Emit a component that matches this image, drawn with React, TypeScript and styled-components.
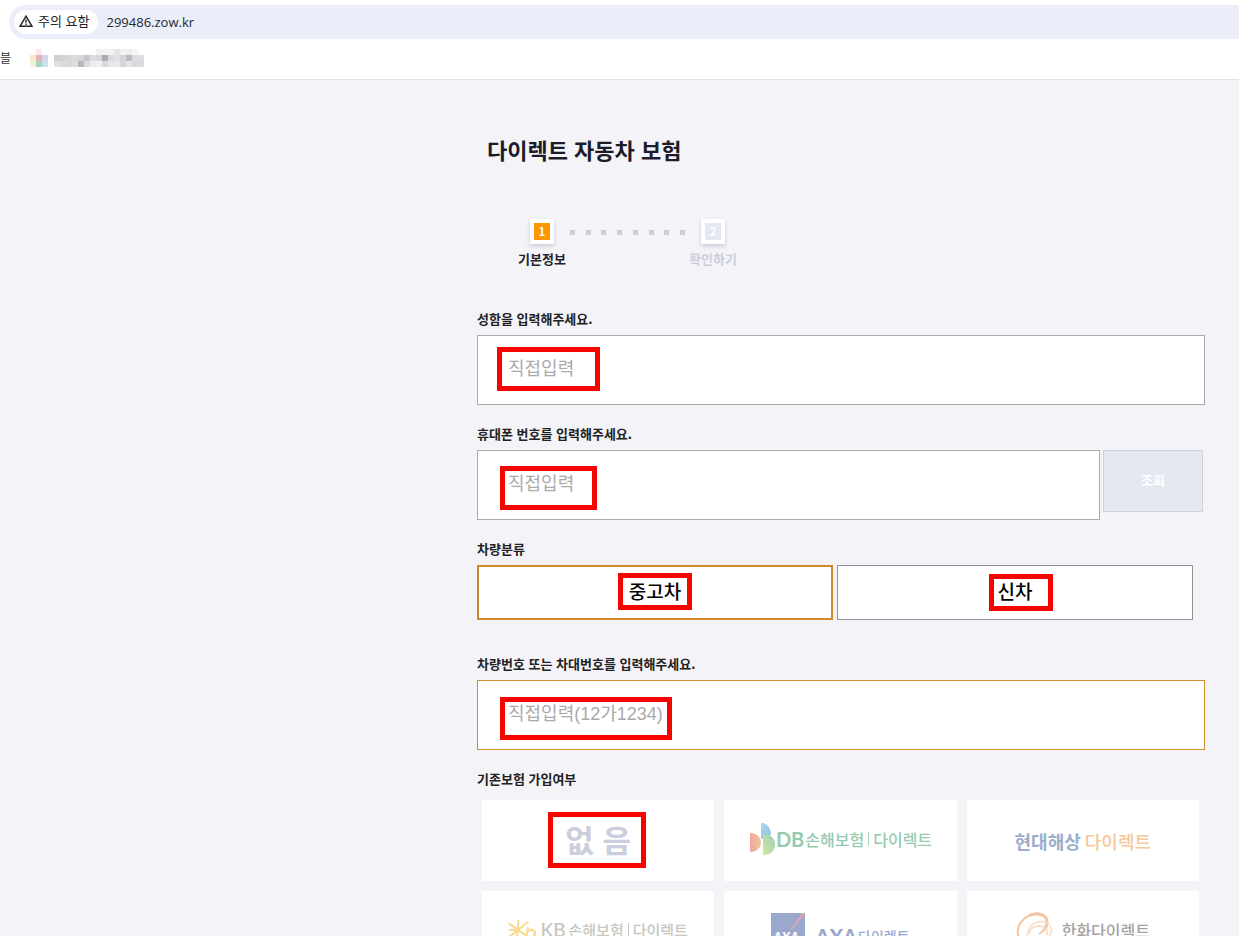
import React from "react";
import styled, { createGlobalStyle, css } from "styled-components";

const GlobalStyle = createGlobalStyle`
  *, *::before, *::after { box-sizing: border-box; }
  body {
    margin: 0;
    background: #f3f3f8;
    color: #222;
    font-family: "Noto Sans CJK KR", sans-serif;
  }
  button, input { font-family: inherit; }
`;

const Shell = styled.div`
  display: flex;
  flex-direction: column;
  height: 100vh;
  overflow: hidden;
`;

/* Browser chrome */
const Chrome = styled.header`
  flex: none;
  background: #fff;
  border-bottom: 1px solid #e0e1e6;
  padding-top: 5px;
`;

const AddressBar = styled.div`
  display: flex;
  align-items: center;
  gap: 8px;
  height: 34px;
  margin-left: 9px;
  padding-left: 5px;
  border-radius: 17px 0 0 17px;
  background: #ebeef8;
`;

const SecurityChip = styled.button`
  display: flex;
  align-items: center;
  gap: 5px;
  height: 24px;
  padding: 0 9px 2px 5px;
  border: 0;
  border-radius: 12px;
  background: #fff;
  color: #222;
  font-size: 13px;
  line-height: 22px;
`;

const Url = styled.span`
  padding-bottom: 1px;
  color: #26282c;
  font-family: "Open Sans", sans-serif;
  font-size: 13px;
  line-height: 20px;
`;

const Bookmarks = styled.nav`
  display: flex;
  align-items: center;
  gap: 19px;
  height: 40px;
  padding-bottom: 3px;
  overflow: hidden;
  color: #333;
  font-size: 12px;
`;

const Page = styled.main`
  flex: 1;
  min-height: 0;
  overflow-y: auto;
  scrollbar-width: none;
  padding: 53px 34px 40px 477px;
`;

const Title = styled.h1`
  margin: 0 0 54px;
  padding-left: 10px;
  color: #1d1b2a;
  font-size: 22px;
  font-weight: 700;
  line-height: 32px;
`;

/* Progress */
const Steps = styled.ol`
  display: flex;
  margin: 0 0 40px;
  padding: 0 0 0 40px;
  list-style: none;
`;

const Step = styled.li<{ $active?: boolean }>`
  display: flex;
  flex-direction: column;
  align-items: center;
  gap: 6px;
  width: 50px;
  color: ${(p) => (p.$active ? "#222130" : "#cbcedc")};
  font-size: 13px;
  font-weight: 700;
  line-height: 18px;
  padding-bottom: 2px;
  white-space: nowrap;
`;

const StepNumber = styled.span<{ $active?: boolean }>`
  width: 24px;
  height: 25px;
  border: 4px solid #fff;
  background: ${(p) => (p.$active ? "#ff9800" : "#e5e8f1")};
  box-shadow: 0 2px 4px #c9cad8;
  color: #fff;
  font-size: 11px;
  line-height: 17px;
  text-align: center;
`;

const Dots = styled.li`
  display: flex;
  justify-content: space-between;
  width: 121px;
  padding: 11px 3px 0;
`;

const Dot = styled.span`
  width: 5px;
  height: 5px;
  background: #cbcedc;
`;

/* Form */
const Group = styled.div`
  min-height: 95px;
  margin-bottom: 20px;
`;

const labelText = css`
  display: block;
  margin: 0 0 7px;
  color: #222;
  font-size: 13px;
  font-weight: 700;
  line-height: 18px;
`;

const Label = styled.label`
  ${labelText}
`;

const Heading = styled.h2`
  ${labelText}
`;

const Row = styled.div<{ $gap: number; $end: number }>`
  display: flex;
  align-items: flex-start;
  gap: ${(p) => p.$gap}px;
  padding-right: ${(p) => p.$end}px;
`;

const Choices = styled.div`
  display: grid;
  grid-template-columns: 1fr 1fr;
  gap: 4px;
  padding-right: 12px;
`;

const Field = styled.div`
  position: relative;
  flex: 1;
`;

const TextInput = styled.input<{ $accent?: boolean }>`
  display: block;
  width: 100%;
  height: 70px;
  padding: 0 30px 2px;
  border: 1px solid ${(p) => (p.$accent ? "#cd8f30" : "#aaa")};
  border-radius: 0;
  outline: 0;
  background: #fff;
  font-family: "Liberation Sans", "Noto Sans CJK KR", sans-serif;
  font-size: 18px;
  &::placeholder { color: #aaa; opacity: 1; }
`;

const LookupButton = styled.button`
  width: 100px;
  height: 62px;
  padding: 0 0 3px;
  border: 1px solid #cdd1da;
  background: #e5e8f1;
  color: #fff;
  font-size: 13px;
  font-weight: 700;
`;

const ChoiceButton = styled.button<{ $selected?: boolean }>`
  position: relative;
  height: 55px;
  padding: 0 0 3px;
  border: ${(p) => (p.$selected ? "2px solid #d0892a" : "1px solid #929296")};
  background: #fff;
  color: #000;
  font-size: 19px;
  font-weight: 500;
  line-height: 28px;
`;

/* Red highlight frame drawn over a control */
const Mark = styled.span<{ $x: string; $y: number; $w: number; $h: number }>`
  position: absolute;
  left: ${(p) => p.$x};
  top: ${(p) => p.$y}px;
  width: ${(p) => p.$w}px;
  height: ${(p) => p.$h}px;
  border: 5px solid #f50400;
  pointer-events: none;
`;

const Insurers = styled.div`
  display: grid;
  grid-template-columns: repeat(3, 1fr);
  gap: 10px;
  padding: 5px 6px 0 5px;
`;

const Insurer = styled.button`
  position: relative;
  display: flex;
  align-items: center;
  justify-content: center;
  height: 81px;
  padding: 0 0 4px;
  border: 0;
  background: #fff;
  white-space: nowrap;
`;

const Word = styled.span<{ $color: string; $size: number; $weight?: number; $latin?: boolean }>`
  color: ${(p) => p.$color};
  font-family: ${(p) => (p.$latin ? '"Lato", ' : "")}"Noto Sans CJK KR", sans-serif;
  font-size: ${(p) => p.$size}px;
  font-weight: ${(p) => p.$weight ?? 500};
  line-height: 24px;
`;

const Divider = styled.span<{ $color: string }>`
  width: 1px;
  height: 14px;
  margin: 0 4px;
  background: ${(p) => p.$color};
`;

const LogoGroup = styled.span<{ $gap: number; $drop?: number }>`
  display: flex;
  align-items: center;
  gap: ${(p) => p.$gap}px;
  padding-top: ${(p) => p.$drop ?? 0}px;
`;

const WarningIcon = () => (
  <svg width="14" height="12" viewBox="0 0 14 12" aria-hidden="true">
    <path d="M7 1.200 13 11.300H1Z" fill="none" stroke="#25272b" strokeWidth="1.500" />
    <path d="M7 4.500v3.200M7 8.600v1.400" stroke="#25272b" strokeWidth="1.400" />
  </svg>
);

const MOSAIC: string[][] = [
  ["", "#fbe8e8", "", "", "", "", "", "", "", "", "", "#f3f1f3", "#f1f1f3", "#f1f1f3", "#e2e4e7", "#f1f1f2", "#efeff1", "#f5f5f6", ""],
  ["#fae6cb", "#e3b3bb", "#d5d6ec", "", "#d0cfd0", "#d4d4d4", "#d8d8d8", "#dddcd9", "#d5d5da", "#ccc5cb", "#dddde5", "#d8d5dc", "#aaaab1", "#d9dade", "#dfe1e4", "#d4d4d9", "#bdb9c8", "#dedee1", "#dcdde0"],
  ["#f0f1df", "#a9d5b5", "#cae0ed", "", "#e2e1df", "#dddcdc", "#d9d9d9", "#dfdeda", "#b7b7bf", "#dedbdf", "#eeeef0", "#f0f0f2", "#d8d8de", "#e7e7e9", "#e9e9eb", "#d6d6d9", "#e4e4e9", "#d8d8da", "#dcdce0"],
];

const Mosaic = () => (
  <svg width="120" height="18" viewBox="0 0 120 18" role="img" aria-label="bookmark">
    {MOSAIC.flatMap((row, y) =>
      row.map((fill, x) =>
        fill ? (
          <rect key={`${x}-${y}`} x={x * 6} y={y * 6} width="6" height="6" fill={fill} shapeRendering="crispEdges" />
        ) : null
      )
    )}
  </svg>
);

const DbLogo = () => (
  <svg width="26" height="34" viewBox="0 0 26 34" aria-hidden="true">
    <defs>
      <linearGradient id="dbBlue" x1="0" y1="0" x2="1" y2="1">
        <stop offset="0" stopColor="#a9dcf3" />
        <stop offset="1" stopColor="#91bce2" />
      </linearGradient>
      <linearGradient id="dbRed" x1="0" y1="0" x2="1" y2="0">
        <stop offset="0" stopColor="#eda6a0" />
        <stop offset="1" stopColor="#f6c39f" />
      </linearGradient>
      <linearGradient id="dbGreen" x1="0" y1="1" x2="1" y2="0">
        <stop offset="0" stopColor="#d3e89f" />
        <stop offset="1" stopColor="#9bcdb5" />
      </linearGradient>
    </defs>
    <path d="M12 2q0-1 1-1c5 0 9 5 9 12H14v4H12Z" fill="url(#dbBlue)" />
    <path d="M1 12q0-1 1-1c5 0 10 4 10 9.500S7 30 2 30q-1 0-1-1Z" fill="url(#dbRed)" />
    <path d="M14 13q0-1 1-1c6 0 11 4 11 10.500S21 33 15 33q-1 0-1-1Z" fill="url(#dbGreen)" />
  </svg>
);

const KbLogo = () => (
  <svg width="29" height="22" viewBox="0 0 29 22" fill="none" stroke="#f8dc92" strokeWidth="2.200" aria-hidden="true">
    <path d="M10.500 1 9 20M1 4.500 20 18M20 3 1 18M1 11h9" />
    <path d="M20 8l-2 12M19 13c3-3 8-3 8 1 0 4-4 6-9 5" />
  </svg>
);

const AxaLogo = () => (
  <svg width="34" height="34" viewBox="0 0 34 34" aria-hidden="true">
    <path d="M0 0h34v34H0Z" fill="#9ba8ce" />
    <path d="M32 0h2L22 15l-2 1.500Z" fill="#eba1ad" stroke="#eba1ad" />
    <text x="15" y="29" textAnchor="middle" fill="#fff" fontFamily="Lato, sans-serif" fontSize="13" fontWeight="900" fontStyle="italic">AXA</text>
  </svg>
);

const HanwhaLogo = () => (
  <svg width="37" height="36" viewBox="0 0 37 36" fill="none" aria-hidden="true">
    <path d="M8 31C-1 25 0 13 9 6 18-1 30 0 31 9c0 6-3 10-8 13" stroke="#f5c4a0" strokeWidth="2" />
    <path d="M13 3.500C22 0 30 3 31 9c0 4-1 7-3 9" stroke="#f5c4a0" strokeWidth="3" />
    <path d="M15 32C9 26 11 15 19 11c7-3 14-1 16 5 2 7-6 14-14 15" stroke="#f9dcc6" strokeWidth="1.500" />
    <path d="M13 22c1-5 5-8 10-8 6 0 9 4 8 9" stroke="#f8d6bd" strokeWidth="1.500" />
  </svg>
);

export default function App() {
  return (
    <Shell lang="ko">
      <GlobalStyle />
      <Chrome>
        <AddressBar>
          <SecurityChip type="button">
            <WarningIcon />
            주의 요함
          </SecurityChip>
          <Url>299486.zow.kr</Url>
        </AddressBar>
        <Bookmarks>
          <span>블</span>
          <Mosaic />
        </Bookmarks>
      </Chrome>

      <Page>
        <Title>다이렉트 자동차 보험</Title>
        <Steps>
          <Step $active aria-current="step">
            <StepNumber $active>1</StepNumber>
            기본정보
          </Step>
          <Dots aria-hidden="true">
            {Array.from({ length: 8 }, (_, i) => (
              <Dot key={i} />
            ))}
          </Dots>
          <Step>
            <StepNumber>2</StepNumber>
            확인하기
          </Step>
        </Steps>

        <form onSubmit={(e) => e.preventDefault()}>
          <Group>
            <Label htmlFor="name">성함을 입력해주세요.</Label>
            <Field>
              <TextInput id="name" placeholder="직접입력" />
              <Mark $x="20px" $y={12} $w={103} $h={44} />
            </Field>
          </Group>

          <Group>
            <Label htmlFor="phone">휴대폰 번호를 입력해주세요.</Label>
            <Row $gap={3} $end={2}>
              <Field>
                <TextInput id="phone" type="tel" placeholder="직접입력" />
                <Mark $x="23px" $y={16} $w={97} $h={44} />
              </Field>
              <LookupButton type="button">조회</LookupButton>
            </Row>
          </Group>

          <Group>
            <Heading>차량분류</Heading>
            <Choices>
              <ChoiceButton type="button" $selected aria-pressed="true">
                중고차
                <Mark $x="calc(50% - 37px)" $y={6} $w={74} $h={37} />
              </ChoiceButton>
              <ChoiceButton type="button" aria-pressed="false">
                신차
                <Mark $x="calc(50% - 26px)" $y={8} $w={64} $h={37} />
              </ChoiceButton>
            </Choices>
          </Group>

          <Group>
            <Label htmlFor="plate">차량번호 또는 차대번호를 입력해주세요.</Label>
            <Field>
              <TextInput id="plate" $accent placeholder="직접입력(12가1234)" />
              <Mark $x="23px" $y={17} $w={172} $h={43} />
            </Field>
          </Group>

          <Heading>기존보험 가입여부</Heading>
          <Insurers>
            <Insurer type="button">
              <Word $color="#cbcedc" $size={31} $weight={700}>없 음</Word>
              <Mark $x="calc(50% - 50px)" $y={12} $w={98} $h={56} />
            </Insurer>
            <Insurer type="button">
              <LogoGroup $gap={1}>
                <DbLogo />
                <Word $color="#96cab0" $size={20} $weight={700} $latin>DB</Word>
                <Word $color="#96cab0" $size={16}>손해보험</Word>
              </LogoGroup>
              <Divider $color="#a9d2bd" />
              <Word $color="#96cab0" $size={16}>다이렉트</Word>
            </Insurer>
            <Insurer type="button">
              <LogoGroup $gap={4} $drop={4}>
                <Word $color="#9aaecb" $size={18} $weight={700}>현대해상</Word>
                <Word $color="#f5c799" $size={18}>다이렉트</Word>
              </LogoGroup>
            </Insurer>
            <Insurer type="button">
              <LogoGroup $gap={3}>
                <KbLogo />
                <Word $color="#c8c5bf" $size={19} $latin>KB</Word>
                <Word $color="#c8c5bf" $size={15}>손해보험</Word>
              </LogoGroup>
              <Divider $color="#c8c5bf" />
              <Word $color="#c8c5bf" $size={15}>다이렉트</Word>
            </Insurer>
            <Insurer type="button">
              <LogoGroup $gap={10}>
                <AxaLogo />
                <LogoGroup $gap={1} $drop={12}>
                  <Word $color="#9ba8ce" $size={20} $weight={900} $latin>AXA</Word>
                  <Word $color="#9ba8ce" $size={14}>다이렉트</Word>
                </LogoGroup>
              </LogoGroup>
            </Insurer>
            <Insurer type="button">
              <LogoGroup $gap={9}>
                <HanwhaLogo />
                <Word $color="#a4a3a4" $size={16}>한화다이렉트</Word>
              </LogoGroup>
            </Insurer>
          </Insurers>
        </form>
      </Page>
    </Shell>
  );
}
